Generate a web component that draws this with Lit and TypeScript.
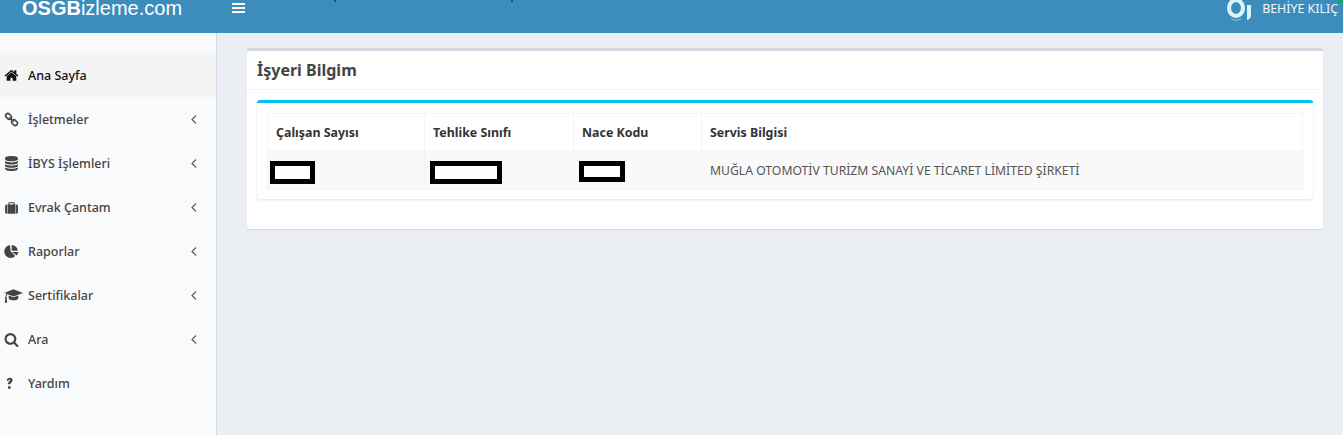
import { LitElement, html, css, svg } from "lit";
import { customElement } from "lit/decorators.js";

const icons: Record<string, unknown> = {
  home: svg`<path d="M1472 992v480q0 26-19 45t-45 19h-384v-384h-256v384h-384q-26 0-45-19t-19-45v-480q0-1 .5-3t.5-3l575-474 575 474q1 2 1 6zm223-69l-62 74q-8 9-21 11h-3q-13 0-21-7l-692-577-692 577q-12 8-24 7-13-2-21-11l-62-74q-8-10-7-23.5t11-21.5l719-599q32-26 76-26t76 26l244 204v-195q0-14 9-23t23-9h192q14 0 23 9t9 23v408l219 182q10 8 11 21.5t-7 23.5z"/>`,
  link: svg`<g fill="none" stroke="currentColor" stroke-width="190"><rect x="160" y="260" width="760" height="520" rx="260" transform="rotate(45 540 520)"/><rect x="880" y="1010" width="760" height="520" rx="260" transform="rotate(45 1260 1270)"/></g><path d="M640 620l520 520" stroke="currentColor" stroke-width="190"/>`,
  database: svg`<path d="M896 768q237 0 443-43t325-127v170q0 69-103 128t-280 93.500-385 34.500-385-34.500-280-93.500-103-128v-170q119 84 325 127t443 43zm0 768q237 0 443-43t325-127v170q0 69-103 128t-280 93.500-385 34.500-385-34.500-280-93.500-103-128v-170q119 84 325 127t443 43zm0-384q237 0 443-43t325-127v170q0 69-103 128t-280 93.500-385 34.500-385-34.500-280-93.500-103-128v-170q119 84 325 127t443 43zm0-1152q208 0 385 34.500t280 93.500 103 128v128q0 69-103 128t-280 93.500-385 34.500-385-34.500-280-93.500-103-128v-128q0-69 103-128t280-93.500 385-34.500z"/>`,
  briefcase: svg`<path d="M640 256h512q53 0 90 38t38 90v156h224q66 0 113 47t47 113v768q0 66-47 113t-113 47h-64v-1120h-64v1120h-960v-1120h-64v1120h-64q-66 0-113-47t-47-113v-768q0-66 47-113t113-47h224v-156q0-52 38-90t90-38zm0 284h512v-156h-512z" fill-rule="evenodd"/>`,
  pie: svg`<path d="M800 896l546 546q-98 100-235 159t-311 59q-330 0-550-224t-220-550q0-300 190-510t500-250z"/><path d="M928 128q300 10 500 210t210 470h-710z"/><path d="M940 960h760q-10 220-170 400z"/>`,
  cap: svg`<path d="M896 100l896 350-896 350-560-220q-90 90-110 260 50 30 50 80 0 40-30 70l60 400h-240l60-400q-30-30-30-70 0-50 50-80 20-200 110-320l-256-70z"/><path d="M440 700l456 170 456-170v250q0 90-135 145t-321 55-321-55-135-145z"/>`,
  search: svg`<path d="M1216 832q0-185-131.500-316.500t-316.500-131.500-316.500 131.500-131.500 316.500 131.500 316.500 316.500 131.500 316.500-131.500 131.500-316.500zm512 832q0 52-38 90t-90 38q-54 0-90-38l-343-342q-179 124-399 124-143 0-273.500-55.500t-225-150-150-225-55.500-273.500 55.500-273.500 150-225 225-150 273.500-55.500 273.500 55.500 225 150 150 225 55.500 273.500q0 220-124 399l343 343q37 37 37 90z"/>`,
  question: svg`<path d="M330 560q40-340 360-340 320 0 350 260 10 180-160 290-100 70-100 170v50h-300v-80q0-170 160-280 100-70 90-140-10-60-80-60-80 0-100 130zM480 1220h300v300h-300z"/>`,
};

const menu = [
  { label: "Ana Sayfa", icon: "home", active: true, arrow: false },
  { label: "İşletmeler", icon: "link", arrow: true },
  { label: "İBYS İşlemleri", icon: "database", arrow: true },
  { label: "Evrak Çantam", icon: "briefcase", arrow: true },
  { label: "Raporlar", icon: "pie", arrow: true },
  { label: "Sertifikalar", icon: "cap", arrow: true },
  { label: "Ara", icon: "search", arrow: true },
  { label: "Yardım", icon: "question", arrow: false },
];

@customElement("app-root")
export class AppRoot extends LitElement {
  static styles = css`
    :host {
      display: block;
      width: 1343px;
      height: 435px;
      overflow: hidden;
      position: relative;
      font-family: "Noto Sans", sans-serif;
      background: #ebeef3;
      color: #444;
    }
    .top {
      height: 33px;
      background: #3c8dbc;
      display: flex;
      overflow: hidden;
      color: #fff;
    }
    .logo {
      width: 232px;
      padding-left: 22px;
      box-sizing: border-box;
      font: 20px/16px "Liberation Sans", sans-serif;
    }
    .logo b { font-weight: 700; }
    .burger { width: 13px; height: 10px; margin-top: 3px; flex: none; }
    .spacer { flex: 1; }
    .avatar { width: 25px; height: 22px; flex: none; }
    .user {
      margin: 1px 5px 0 10px;
      font: 12.4px/15px "Noto Sans", sans-serif;
      color: #f2f7fb;
    }
    .corner { position: absolute; right: 0; top: 0; width: 5px; height: 3px; background: #0fa860; }
    .speck { position: absolute; top: 0; width: 2px; height: 2px; background: #444; }
    .main { display: flex; height: 402px; }
    .side {
      width: 217px;
      box-sizing: border-box;
      flex: none;
      background: #f9fafc;
      border-right: 1px solid #d2d6de;
      padding-top: 20px;
    }
    .item {
      height: 44px;
      display: flex;
      align-items: center;
      padding: 0 19px 0 4px;
      font-size: 12.5px;
      font-weight: 500;
    }
    .item.active { background: #f4f4f5; color: #111; }
    .ico { width: 15px; height: 15px; flex: none; margin-right: 9px; display: block; fill: currentColor; }
    .ico.wide { width: 19px; height: 15px; margin-right: 5px; }
    .label { flex: 1; }
    .chev { width: 6px; height: 9px; fill: none; stroke: #6b5c55; stroke-width: 1.2; flex: none; }
    .content { flex: 1; padding: 15px 20px 0 30px; }
    .box {
      background: #fff;
      border-top: 3px solid #d2d6de;
      border-radius: 3px;
      box-shadow: 0 1px 1px rgba(0, 0, 0, 0.1);
      height: 181px;
      box-sizing: border-box;
    }
    .box-head {
      height: 39px;
      box-sizing: border-box;
      padding-left: 10px;
      border-bottom: 1px solid #f4f4f4;
      font-size: 16px;
      font-weight: 700;
      line-height: 38px;
      color: #444;
    }
    .box-body { padding: 10px; }
    .inner {
      border-top: 3px solid #00c0ef;
      border-radius: 3px;
      box-shadow: 0 1px 3px rgba(0, 0, 0, 0.12);
      padding: 10px;
      height: 99px;
      box-sizing: border-box;
    }
    table { border-collapse: collapse; width: 1036px; table-layout: fixed; }
    th, td { border: 1px solid #f4f4f4; padding: 0 0 0 8px; text-align: left; }
    th { height: 36px; font-size: 12.4px; font-weight: 700; color: #333; }
    td { height: 38px; font-size: 12.2px; font-weight: 400; color: #555; }
    tr.odd { background: #f9f9f9; }
    td.red { padding: 0; vertical-align: top; }
    .mask { display: block; box-sizing: border-box; background: #fff; border: 5px solid #000; margin-top: 10px; }
    .m1 { width: 45px; height: 23px; margin-left: 2px; }
    .m2 { width: 72px; height: 23px; margin-left: 5px; }
    .m3 { width: 46px; height: 21px; margin-left: 5px; }
  `;

  render() {
    return html`
      <div class="top">
        <div class="logo"><b>OSGB</b>izleme.com</div>
        <svg class="burger" viewBox="0 0 13 10"><path d="M0 0h13v2H0zM0 4h13v2H0zM0 8h13v2H0z" fill="#fff"/></svg>
        <div class="spacer"></div>
        <svg class="avatar" viewBox="0 0 25 22">
          <ellipse cx="9" cy="8" rx="7" ry="8" fill="none" stroke="#dcf2f6" stroke-width="4"/>
          <path d="M20 5h4v10q0 4-4 5z" fill="#dcf2f6"/>
          <path d="M4 19q5 3 10 0" fill="none" stroke="#8fc5dc" stroke-width="1"/>
        </svg>
        <div class="user">BEHİYE KILIÇ</div>
      </div>
      <span class="corner"></span>
      <span class="speck" style="left:334px"></span>
      <span class="speck" style="left:511px"></span>
      <div class="main">
        <nav class="side">
          ${menu.map(
            (m) => html`
              <div class="item ${m.active ? "active" : ""}">
                ${m.icon === "cap"
                  ? html`<svg class="ico wide" viewBox="0 0 1792 1394">${icons[m.icon]}</svg>`
                  : html`<svg class="ico" viewBox="0 0 1792 1792">${icons[m.icon]}</svg>`}
                <span class="label">${m.label}</span>
                ${m.arrow ? html`<svg class="chev" viewBox="0 0 6 9"><path d="M5 .5L1 4.500 5 8.500"/></svg>` : ""}
              </div>
            `
          )}
        </nav>
        <main class="content">
          <section class="box">
            <div class="box-head">İşyeri Bilgim</div>
            <div class="box-body">
              <div class="inner">
                <table>
                  <colgroup>
                    <col style="width:157px" /><col style="width:149px" /><col style="width:128px" /><col />
                  </colgroup>
                  <tr><th>Çalışan Sayısı</th><th>Tehlike Sınıfı</th><th>Nace Kodu</th><th>Servis Bilgisi</th></tr>
                  <tr class="odd">
                    <td class="red"><span class="mask m1"></span></td>
                    <td class="red"><span class="mask m2"></span></td>
                    <td class="red"><span class="mask m3"></span></td>
                    <td>MUĞLA OTOMOTİV TURİZM SANAYİ VE TİCARET LİMİTED ŞİRKETİ</td>
                  </tr>
                </table>
              </div>
            </div>
          </section>
        </main>
      </div>
    `;
  }
}
